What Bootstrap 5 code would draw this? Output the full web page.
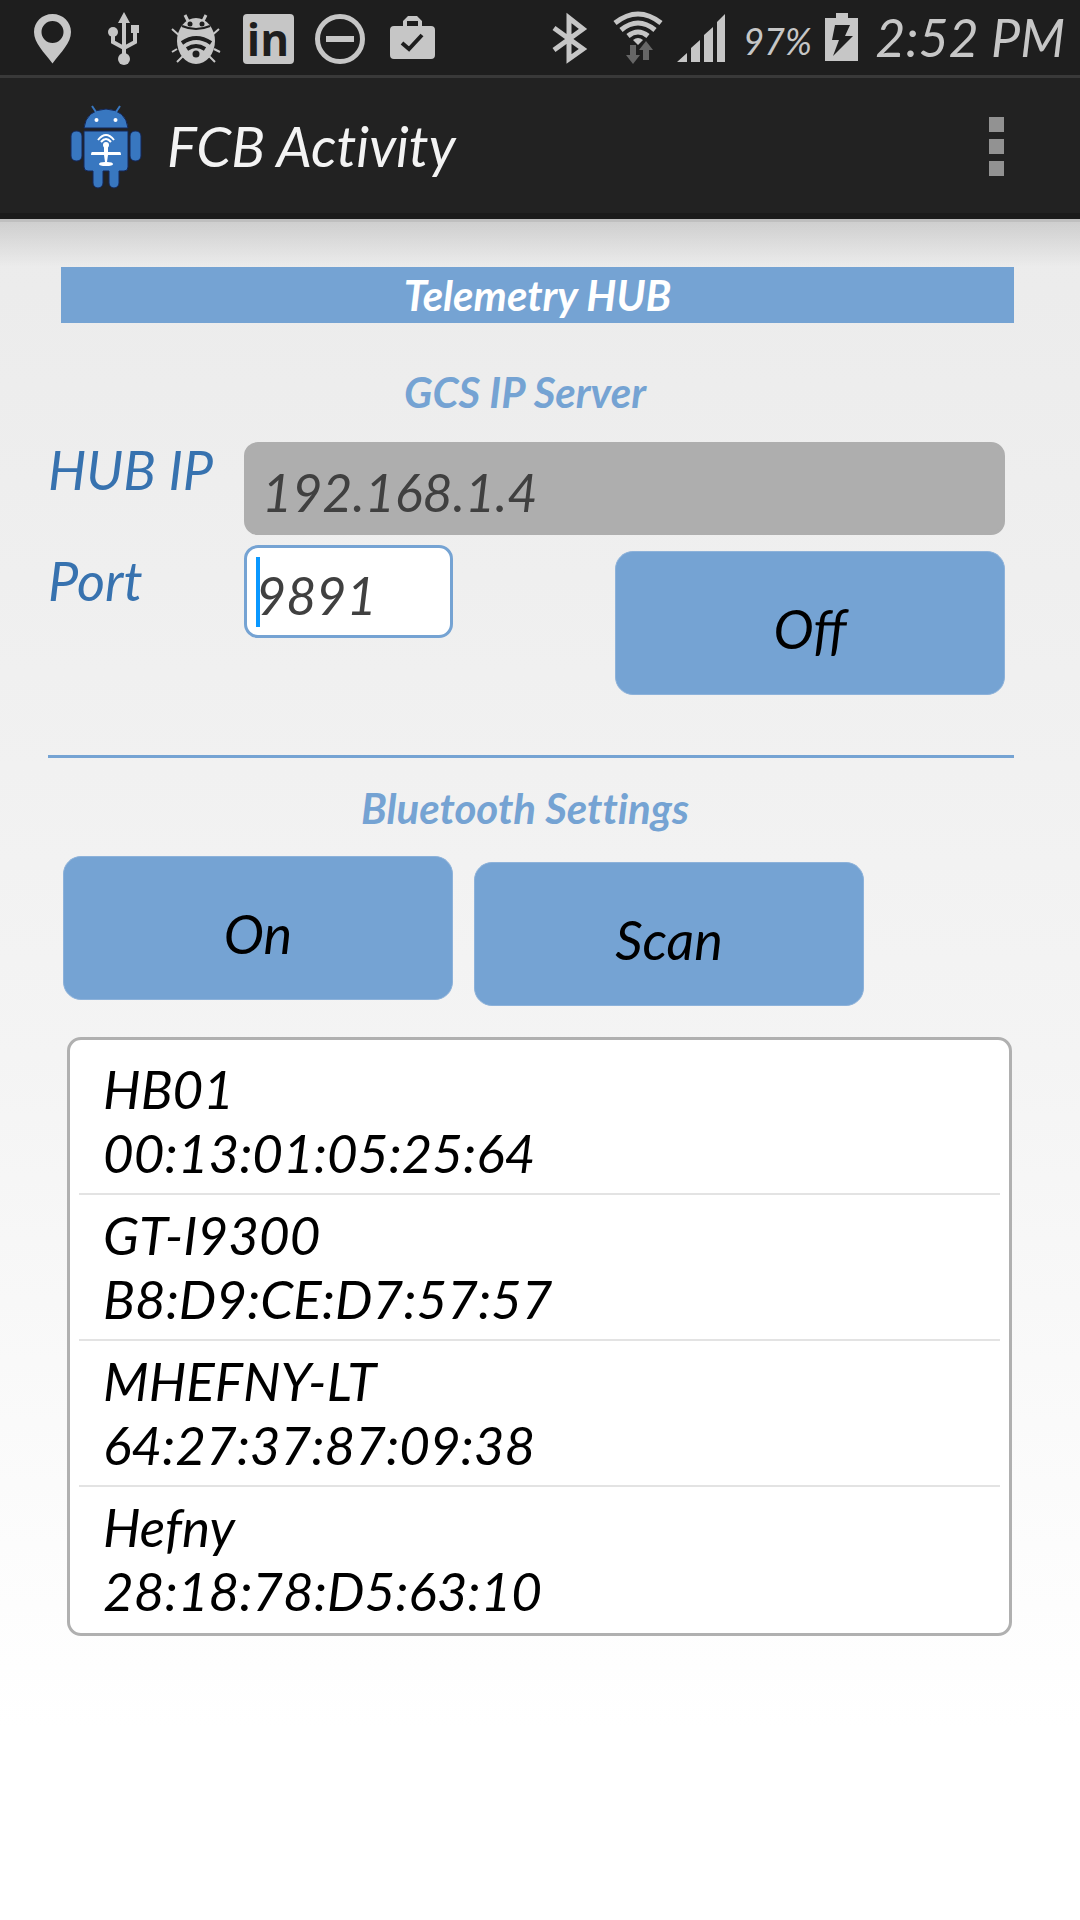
<!DOCTYPE html>
<html lang="en">
<head>
<meta charset="utf-8">
<meta name="viewport" content="width=device-width, initial-scale=1">
<title>FCB Activity</title>
<link href="https://cdn.jsdelivr.net/npm/bootstrap@5.3.0/dist/css/bootstrap.min.css" rel="stylesheet">
<style>
  :root { --sky: #75a3d3; --deep: #3772af; }
  body {
    font-family: Lato, "Open Sans", sans-serif;
    font-style: italic;
    font-variant-ligatures: none;
    color: #000;
    background: linear-gradient(#e9e9e9, #f4f4f4 55%, #fff 90%) no-repeat #fff;
    min-height: 100vh;
  }
  .status-bar { background: #1e1e1e; color: #c6c6c6; height: 78px; border-bottom: 3px solid #393939; padding: 0 15px 0 16px; }
  .status-bar svg { display: block; fill: #c6c6c6; flex: none; }
  .status-pct { width: 85px; font-size: 36px; line-height: 75px; padding-top: 4px; }
  .status-time { width: 200px; font-size: 52px; line-height: 75px; white-space: nowrap; }
  .app-bar { background: #222; height: 141px; border-bottom: 6px solid #1b1b1b; padding: 0 70px 0 70px; }
  .app-title { color: #f3f3f3; font-size: 56px; line-height: 60px; margin-left: 25px; font-weight: 400; }
  .menu-btn { background: none; border: 0; padding: 8px 6px 6px; gap: 7px; }
  .menu-btn i { display: block; width: 15px; height: 15px; background: #929292; }
  .bar-shadow { height: 48px; border-top: 3px solid #bfbfbf; background: linear-gradient(rgba(0,0,0,.12), rgba(0,0,0,0)); }
  .screen-body { padding: 0 66px 0 48px; }
  .banner { background: var(--sky); color: #fff; font-size: 42px; line-height: 56px; font-weight: 700; margin: 0 0 0 13px; }
  .section-title { color: var(--sky); font-size: 42px; line-height: 56px; font-weight: 700; margin: 0; padding-right: 12px; }
  .gcs-title { padding-top: 41px; }
  .hub-form { margin: 22px 9px 0 0; }
  .field-label { color: var(--deep); font-size: 54px; line-height: 56px; width: 196px; flex: none; white-space: nowrap; }
  .box-input { height: 93px; border-radius: 14px; border: 3px solid #aeaeae; font-size: 52px; line-height: 60px; font-style: italic; color: #404040; padding: 6px 15px 0; }
  .box-input:disabled { background: #aeaeae; color: #404040; opacity: 1; }
  .port-row { margin-top: 10px; }
  .port-wrap { width: 209px; }
  .port-input { border-color: var(--sky); padding-left: 9px; background: #fff; color: #404040; }
  .port-caret { position: absolute; left: 12px; top: 12px; width: 4px; height: 70px; background: #0a98ff; }
  .pad-btn { width: 390px; height: 144px; border-radius: 18px; background: var(--sky); border: 1px solid #8db2da; color: #000; font-size: 54px; line-height: 60px; font-style: italic; padding: 12px 0 0; }
  .pad-btn:hover { background: #6797c9; color: #000; }
  .pad-low { margin-top: 6px; }
  .rule-line { height: 3px; background: var(--sky); opacity: 1; border: 0; margin: 60px 0 22px; }
  .radio-row { gap: 21px; padding-left: 15px; margin-top: 20px; }
  .device-list { background: #fff; border: 3px solid #b0b0b0; border-radius: 14px; margin: 31px 2px 0 19px; padding: 9px 9px 2px; }
  .device-row { font-size: 53px; line-height: 64px; padding: 8px 24px; border-bottom: 2px solid #e3e3e3; color: #000; }
  .device-row:last-child { border-bottom: 0; }
  .device-row div { white-space: nowrap; }
</style>
</head>
<body>
<header>
  <div class="status-bar d-flex align-items-start">
    <svg width="72" height="75" viewBox="16 0 72 75"><path fill-rule="evenodd" d="M52.500 14C42 14 34 22 34 32c0 11 10 20 18.500 31.500C61 52 71 43 71 32c0-10-8-18-18.500-18zm0 7a11 11 0 1 1 0 22 11 11 0 0 1 0-22z"/></svg>
    <svg width="72" height="75" viewBox="88 0 72 75"><circle cx="124" cy="59" r="6"/><circle cx="113" cy="32" r="5"/><path d="M124 12l6 11h-12zM131 25h8v8h-8z"/><path fill="none" stroke="#c6c6c6" stroke-width="4" d="M124 20v36M113 33v9l11 6M135 31v11l-11 6"/></svg>
    <svg width="72" height="75" viewBox="160 0 72 75"><path stroke="#c6c6c6" stroke-width="2" d="M181 37l-9-8M210 37l9-8M177 49l-5 3M214 49l6 3M183 56l-6 6M209 56l6 6"/><path stroke="#c6c6c6" stroke-width="3" d="M188 21l-3-6M203 21l3-6"/><ellipse cx="196" cy="41" rx="19" ry="23"/><g fill="none" stroke="#1e1e1e"><path stroke-width="2" d="M182 26q14 6 28 0"/><path stroke-width="4" d="M182 43q14-10 29 0M187 49q9-6 18 0"/></g><g fill="#1e1e1e"><circle cx="190" cy="24" r="2.500"/><circle cx="202" cy="24" r="2.500"/><circle cx="196" cy="54" r="3.500"/></g></svg>
    <svg width="72" height="75" viewBox="232 0 72 75"><rect x="243" y="14" width="51" height="50" rx="4"/><text x="268" y="56" text-anchor="middle" font-family="Open Sans" font-style="normal" font-weight="700" font-size="44" fill="#1e1e1e">in</text></svg>
    <svg width="72" height="75" viewBox="304 0 72 75"><circle cx="340" cy="39" r="22.500" fill="none" stroke="#c6c6c6" stroke-width="5"/><path d="M326 36h28v6h-28z"/></svg>
    <svg width="72" height="75" viewBox="376 0 72 75"><path fill-rule="evenodd" d="M403 26v-5l5-5h9l5 5v5h9q4 0 4 4v25q0 4-4 4h-37q-4 0-4-4V30q0-4 4-4zm4 0h11v-5h-11z"/><path fill="none" stroke="#1e1e1e" stroke-width="4" d="M402 43l7 6 13-14"/></svg>
    <svg class="ms-auto" width="60" height="75" viewBox="540 0 60 75"><path fill="none" stroke="#c6c6c6" stroke-width="5" d="M554 28l29 21-14 10V18l14 11-29 21"/></svg>
    <svg width="70" height="75" viewBox="600 0 70 75"><g fill="none" stroke="#c6c6c6" stroke-width="5"><path d="M615 23q23-18 46 0M621 30q17-14 34 0M628 36q10-8 20 0"/></g><path d="M633 40q5-4 10 0l-5 5z"/><path fill="#666" d="M630 45h6v10h4l-7 9-7-9h4zM643 60V50h-4l7-9 7 9h-4v10z"/></svg>
    <svg width="65" height="75" viewBox="670 0 65 75"><path d="M677 62l10-9v9zM691 62V48l9-8v22zM704 62V35l9-8v35zM717 62V22l8-8v48z"/></svg>
    <span class="status-pct text-center">97%</span>
    <svg width="45" height="75" viewBox="820 0 45 75"><path d="M825 18h11v-5h12v5h10v43h-33z"/><path fill="#1e1e1e" d="M835 25h15l-5 11h8l-20 20 6-16h-7z"/></svg>
    <span class="status-time text-end">2:52 PM</span>
  </div>
  <nav class="app-bar d-flex align-items-center">
    <svg width="72" height="86" viewBox="70 103 72 86" fill="#3877c0"><g stroke="#142657" stroke-width="1"><path d="M84 128q2-18 22-19 20 1 22 19z"/><path d="M84 131h44v36q0 4-4 4h-5v12a5 5 0 0 1-10 0v-12h-6v12a5 5 0 0 1-10 0v-12h-5q-4 0-4-4z"/><rect x="71" y="131" width="11" height="30" rx="5"/><rect x="130" y="131" width="11" height="30" rx="5"/></g><path stroke="#3877c0" stroke-width="2" d="M96 112l-4-6M116 112l4-6"/><g fill="#fff"><circle cx="96.500" cy="120" r="2"/><circle cx="115.500" cy="120" r="2"/><circle cx="106" cy="145" r="3"/><path d="M104 145h4v7h12q1 0 1 3h-13l-1 7q6 0 6 2t-7 2-7-2 6-2l-1-7H91q0-3 1-3h12z"/></g><path fill="none" stroke="#fff" stroke-width="2" d="M98 140q8-10 16 0M101 142q5-6 10 0"/></svg>
    <h1 class="app-title mb-0">FCB Activity</h1>
    <button class="menu-btn d-flex flex-column ms-auto" type="button" aria-label="More options"><i></i><i></i><i></i></button>
  </nav>
</header>
<div class="bar-shadow"></div>
<main class="screen-body">
  <h2 class="banner text-center">Telemetry HUB</h2>
  <form>
    <h3 class="section-title gcs-title text-center">GCS IP Server</h3>
    <div class="hub-form">
      <div class="d-flex align-items-start">
        <label class="field-label" for="hubIp">HUB IP</label>
        <input class="form-control box-input" id="hubIp" type="text" value="192.168.1.4" disabled>
      </div>
      <div class="port-row d-flex align-items-start">
        <label class="field-label pt-2" for="hubPort">Port</label>
        <div class="port-wrap position-relative">
          <input class="form-control box-input port-input" id="hubPort" type="text" value="9891">
          <span class="port-caret"></span>
        </div>
        <button class="btn pad-btn pad-low ms-auto" type="button">Off</button>
      </div>
    </div>
  </form>
  <hr class="rule-line">
  <section>
    <h3 class="section-title text-center">Bluetooth Settings</h3>
    <div class="radio-row d-flex align-items-start">
      <button class="btn pad-btn" type="button">On</button>
      <button class="btn pad-btn pad-low" type="button">Scan</button>
    </div>
    <ul class="device-list list-unstyled">
      <li class="device-row"><div>HB01</div><div>00:13:01:05:25:64</div></li>
      <li class="device-row"><div>GT-I9300</div><div>B8:D9:CE:D7:57:57</div></li>
      <li class="device-row"><div>MHEFNY-LT</div><div>64:27:37:87:09:38</div></li>
      <li class="device-row"><div>Hefny</div><div>28:18:78:D5:63:10</div></li>
    </ul>
  </section>
</main>
<script src="https://cdn.jsdelivr.net/npm/bootstrap@5.3.0/dist/js/bootstrap.bundle.min.js"></script>
</body>
</html>
